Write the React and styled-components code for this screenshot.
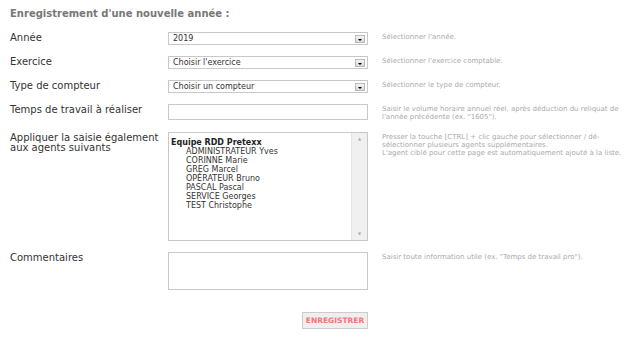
import React from 'react';
import styled, { createGlobalStyle } from 'styled-components';

const agents = [
  'ADMINISTRATEUR Yves',
  'CORINNE Marie',
  'GREG Marcel',
  'OPÉRATEUR Bruno',
  'PASCAL Pascal',
  'SERVICE Georges',
  'TEST Christophe',
];

const FakeSelect = ({ value }) => (
  <SelectBox>
    <SelectValue>{value}</SelectValue>
    <DropButton />
  </SelectBox>
);

const App = () => (
  <>
    <GlobalStyle />
    <Page>
      <Title>Enregistrement d'une nouvelle année :</Title>
      <FormGrid>
        <Label>Année</Label>
        <FakeSelect value="2019" />
        <Hint>Sélectionner l'année.</Hint>

        <Label>Exercice</Label>
        <FakeSelect value="Choisir l'exercice" />
        <Hint>Sélectionner l'exercice comptable.</Hint>

        <Label>Type de compteur</Label>
        <FakeSelect value="Choisir un compteur" />
        <Hint>Sélectionner le type de compteur.</Hint>

        <Label>Temps de travail à réaliser</Label>
        <TextInput />
        <Hint>
          Saisir le volume horaire annuel réel, après déduction du reliquat de
          <br />
          l'année précédente (ex. "1605").
        </Hint>

        <Label>
          Appliquer la saisie également
          <br />
          aux agents suivants
        </Label>
        <MultiBox>
          <OptionList>
            <GroupLabel>Equipe RDD Pretexx</GroupLabel>
            {agents.map((a) => (
              <AgentOption key={a}>{a}</AgentOption>
            ))}
          </OptionList>
          <ScrollTrack>
            <ScrollArrow>▲</ScrollArrow>
            <ScrollArrow>▼</ScrollArrow>
          </ScrollTrack>
        </MultiBox>
        <Hint>
          Presser la touche [CTRL] + clic gauche pour sélectionner / dé-
          <br />
          sélectionner plusieurs agents supplémentaires.
          <br />
          L'agent ciblé pour cette page est automatiquement ajouté à la liste.
        </Hint>

        <Label>Commentaires</Label>
        <TextArea />
        <Hint>Saisir toute information utile (ex. "Temps de travail pro").</Hint>

        <span />
        <ButtonCell>
          <SaveButton>ENREGISTRER</SaveButton>
        </ButtonCell>
        <span />
      </FormGrid>
    </Page>
  </>
);

const GlobalStyle = createGlobalStyle`
  body {
    margin: 0;
    background: #fff;
    font-family: 'DejaVu Sans', Verdana, sans-serif;
  }
`;

const Page = styled.div`
  padding: 7px 10px 0 10px;
`;

const Title = styled.div`
  font-size: 10px;
  font-weight: bold;
  color: #777;
  line-height: 13px;
  margin-bottom: 12px;
`;

const FormGrid = styled.div`
  display: grid;
  grid-template-columns: 144px 200px 1fr;
  column-gap: 14px;
  row-gap: 11px;
  align-items: start;
`;

const Label = styled.div`
  font-size: 10px;
  line-height: 10px;
  color: #333;
  padding-top: 1px;
  white-space: nowrap;
`;

const Hint = styled.div`
  font-size: 7px;
  line-height: 8px;
  color: #aaa;
  padding-top: 1px;
  white-space: nowrap;
`;

const SelectBox = styled.div`
  box-sizing: border-box;
  height: 13px;
  border: 1px solid #c8c8c8;
  display: flex;
  align-items: center;
  justify-content: space-between;
  padding: 0 2px 0 4px;
`;

const SelectValue = styled.span`
  font-size: 8px;
  color: #333;
`;

const DropButton = styled.span`
  box-sizing: border-box;
  width: 10px;
  height: 8px;
  border: 1px solid #bbb;
  background: linear-gradient(#f4f4f4, #d8d8d8);
  position: relative;

  &::after {
    content: '';
    position: absolute;
    left: 2px;
    top: 3px;
    border-left: 2px solid transparent;
    border-right: 2px solid transparent;
    border-top: 2px solid #000;
  }
`;

const TextInput = styled.div`
  box-sizing: border-box;
  height: 16px;
  border: 1px solid #c8c8c8;
`;

const MultiBox = styled.div`
  box-sizing: border-box;
  height: 109px;
  border: 1px solid #c8c8c8;
  display: flex;
`;

const OptionList = styled.div`
  flex: 1;
  padding: 5px 0 0 2px;
`;

const GroupLabel = styled.div`
  font-size: 8px;
  font-weight: bold;
  line-height: 9px;
  color: #222;
`;

const AgentOption = styled.div`
  font-size: 8px;
  line-height: 9px;
  color: #333;
  padding-left: 15px;
`;

const ScrollTrack = styled.div`
  width: 15px;
  background: #f0f0f0;
  border-left: 1px solid #e4e4e4;
  display: flex;
  flex-direction: column;
  justify-content: space-between;
  align-items: center;
  padding: 4px 0;
`;

const ScrollArrow = styled.span`
  font-size: 4px;
  color: #aaa;
  line-height: 4px;
`;

const TextArea = styled.div`
  box-sizing: border-box;
  height: 38px;
  border: 1px solid #c8c8c8;
`;

const ButtonCell = styled.div`
  display: flex;
  justify-content: flex-end;
  margin-top: 11px;
`;

const SaveButton = styled.button`
  box-sizing: border-box;
  height: 17px;
  width: 66px;
  padding: 0;
  border: 1px solid #ccc;
  background: #efefef;
  color: #ee7777;
  font-family: 'DejaVu Sans', Verdana, sans-serif;
  font-size: 7.5px;
  font-weight: bold;
`;

export default App;
